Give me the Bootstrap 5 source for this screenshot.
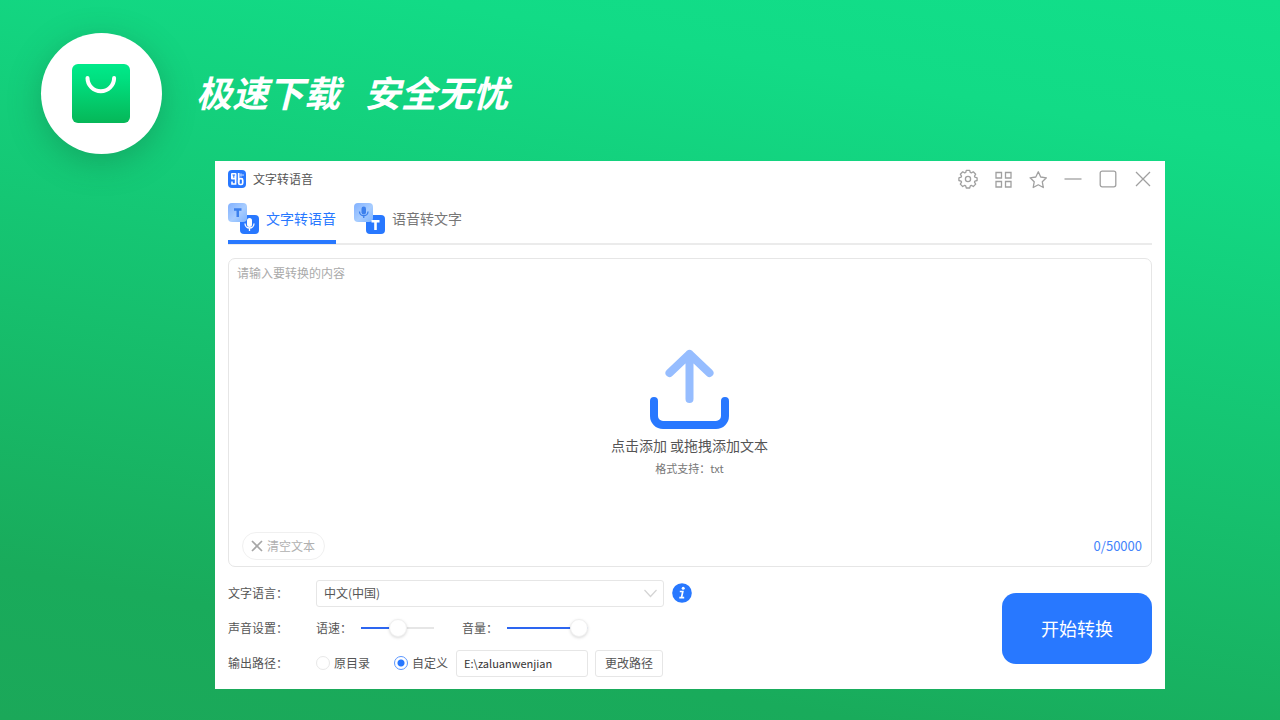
<!DOCTYPE html>
<html lang="zh-CN">
<head>
<meta charset="utf-8">
<meta name="viewport" content="width=device-width, initial-scale=1">
<title>文字转语音</title>
<link href="https://cdn.jsdelivr.net/npm/bootstrap@5.3.0/dist/css/bootstrap.min.css" rel="stylesheet">
<style>
:root { --blue: #2878ff; --line: #e6e6e6; --ink: #555; }
body { font-family: "Noto Sans CJK SC", sans-serif; font-size: 12px; line-height: 18px; color: var(--ink);
  background: linear-gradient(190deg, #11df8a 0%, #12db86 16%, #19ab5b 84%, #1ba859 100%); }
.hero { padding: 33px 41px 7px; gap: 34px; }
.logo-disc { width: 121px; height: 121px; background: #fff; box-shadow: 0 8px 32px rgba(20, 100, 60, .35); }
.slogan { font: italic 700 36px/48px "Noto Sans CJK SC", sans-serif; color: #fff; white-space: pre; padding-bottom: 6px; }
.app { margin: 0 115px 31px 215px; padding: 5px 13px 12px; background: #fff; }
.title-bar { height: 26px; }
.win-btns { gap: 15px; margin-right: -1px; }
.win-btns button, .plain { border: 0; background: none; padding: 0; color: inherit; }
.win-btns svg { fill: none; stroke: #a0a0a0; stroke-width: 1.3; display: block; }
.brand { gap: 7px; }
.brand span { padding-bottom: 1px; }
.tabs { border-bottom: 2px solid #ebebeb; gap: 18px; margin: 10px 0 13px; height: 43px; }
.tabs a { color: #777; font-size: 14px; text-decoration: none; gap: 6px; height: 42px; padding-bottom: 4px; border-bottom: 4px solid transparent; }
.tabs a.active { color: var(--blue); border-color: var(--blue); }
.tabs span { padding-bottom: 3px; }
.editor { border: 1px solid var(--line); border-radius: 7px; padding: 5px 9px 6px 8px; }
.editor textarea { border: 0; padding: 0; resize: none; height: 72px; outline: 0; font-size: 12px; line-height: 18px; }
.editor textarea::placeholder { color: #aaa; }
.upload { color: #555; }
.upload svg { margin: 13px 0 3px; }
.upload-main { font-size: 14px; line-height: 24px; }
.upload-sub { font-size: 11px; line-height: 22px; color: #777; }
.clear { height: 28px; border: 1px solid #f0f0f0; border-radius: 14px; background: #fff; color: #b0b0b0; padding: 0 9px 0 8px; margin-left: 5px; gap: 4px; }
.count { color: #4483fb; font-size: 13px; }
.settings { padding-top: 12px; gap: 7px; }
.set-row { min-height: 28px; }
.set-name { width: 88px; }
.field { height: 27px; border: 1px solid var(--line); border-radius: 3px; background-color: #fff; color: var(--ink); padding: 0 7px; font-size: 12px; }
.lang { width: 348px; appearance: none; padding-right: 26px; }
.lang-wrap svg { position: absolute; right: 7px; top: 9px; pointer-events: none; }
.path { width: 132px; margin-right: 7px; color: #333; font-size: 11px; }
.change { padding: 0 9px; }
.slide-name { margin-right: 9px; }
.slide { appearance: none; height: 20px; width: 73px; margin: 0; background: linear-gradient(to right, #2d66f0 var(--val), #e6e6e6 var(--val)) center / 100% 2px no-repeat; }
.slide-full { width: 81px; }
.slide::-webkit-slider-thumb { appearance: none; width: 18px; height: 18px; border-radius: 50%; background: #fff; border: 1px solid #f0f0f0; box-shadow: 0 1px 3px rgba(0, 0, 0, .15); }
.pick { appearance: none; width: 14px; height: 14px; margin: 0 4px 0 0; border: 1px solid #e8e8e8; border-radius: 50%; }
.pick:checked { border-color: #5c98ff; background: radial-gradient(circle, var(--blue) 3px, #fff 4px); }
.start { width: 150px; height: 71px; border: 0; border-radius: 14px; background: var(--blue); color: #fff; font-size: 18px; margin-top: 12px; }
</style>
</head>
<body class="min-vh-100 d-flex flex-column">
<header class="hero d-flex align-items-center">
  <div class="logo-disc rounded-circle d-flex align-items-center justify-content-center flex-shrink-0">
    <svg width="59" height="59" viewBox="0 0 59 59" aria-hidden="true">
      <defs><linearGradient id="bag" x1="0" y1="0" x2="0" y2="1"><stop offset="0" stop-color="#00ea8a"/><stop offset=".25" stop-color="#00e080"/><stop offset="1" stop-color="#06b758"/></linearGradient></defs>
      <rect width="58" height="59" rx="6" fill="url(#bag)"/>
      <path d="M15.500 14a13.300 13.300 0 0 0 26.600 0" fill="none" stroke="#fff" stroke-width="4" stroke-linecap="round"/>
    </svg>
  </div>
  <h1 class="slogan m-0">极速下载   安全无忧</h1>
</header>
<main class="app flex-grow-1 d-flex flex-column">
  <div class="title-bar d-flex align-items-center justify-content-between">
    <div class="brand d-flex align-items-center">
      <svg width="18" height="18" viewBox="0 0 18 18" aria-hidden="true">
        <rect width="18" height="18" rx="4" fill="#2878ff"/>
        <rect x="3" y="3" width="5.500" height="6.500" rx="1" fill="#fff"/>
        <path d="M4.500 5h2.600M5.800 5v2.800" stroke="#2878ff"/>
        <path d="M7.600 9v5H4v-2.500" fill="none" stroke="#fff" stroke-width="1.600"/>
        <path d="M10.700 3v9.500" stroke="#fff" stroke-width="1.700"/>
        <rect x="10.700" y="8.700" width="4" height="5.800" rx="1.500" fill="none" stroke="#fff" stroke-width="1.700"/>
        <path d="M13 3.500v3M15 4.300v1.500" stroke="#fff"/>
      </svg>
      <span>文字转语音</span>
    </div>
    <div class="win-btns d-flex align-items-center">
      <button aria-label="设置"><svg width="20" height="20" viewBox="0 0 20 20"><path d="M8.300 1.300h3.400l.6 2.200 1 .4 2-1.100 2.400 2.400-1.200 2 .4 1 2.200.6v2.700l-2.200.6-.4 1 1.200 2-2.400 2.400-2-1.200-1 .5-.6 2.200H8.300l-.6-2.200-1-.5-2 1.200-2.400-2.400 1.200-2-.4-1-2.200-.6V8.800l2.200-.6.4-1-1.200-2 2.400-2.400 2 1.100 1-.4z" stroke-linejoin="round"/><circle cx="10" cy="10" r="2.600"/></svg></button>
      <button aria-label="应用"><svg width="20" height="20" viewBox="0 0 20 20"><path d="M3 3.500h5.500V9H3zM12.500 3.500H18V9h-5.500zM3 12.500h5.500V18H3zM12.500 12.500H18V18h-5.500z"/></svg></button>
      <button aria-label="收藏"><svg width="20" height="20" viewBox="0 0 20 20"><path d="m10.300 2.800 2.400 5.200 5.700.8-4.100 4 1 5.700-5-2.700-5.100 2.700 1-5.700-4.100-4 5.700-.8z" stroke-linejoin="round"/></svg></button>
      <button aria-label="最小化"><svg width="20" height="20" viewBox="0 0 20 20"><path d="M1.500 10h17"/></svg></button>
      <button aria-label="最大化"><svg width="20" height="20" viewBox="0 0 20 20"><rect x="2.200" y="2.200" width="15.600" height="15.600" rx="2"/></svg></button>
      <button aria-label="关闭"><svg width="20" height="20" viewBox="0 0 20 20"><path d="m3 3 14 14M17 3 3 17"/></svg></button>
    </div>
  </div>
  <nav class="tabs d-flex">
    <a href="#tts" class="active d-flex align-items-center" aria-current="page">
      <svg width="32" height="32" viewBox="0 0 32 32" aria-hidden="true">
        <defs><linearGradient id="glass" x1="0" y1="0" x2="1" y2="1"><stop offset="0" stop-color="#82b1ff"/><stop offset=".55" stop-color="#a8cdff"/><stop offset="1" stop-color="#7eb4ff"/></linearGradient></defs>
        <rect x="12" y="12" width="19" height="19" rx="4" fill="#2878ff"/><rect width="19" height="19" rx="4" fill="url(#glass)"/>
        <path d="M6 6.500h7.500M9.750 6.500V14" stroke="#3c80ed" stroke-width="2.500"/>
        <rect x="19" y="15" width="5" height="9" rx="2.500" fill="#fff"/><path d="M17 20.500a4.500 4.500 0 0 0 9 0M21.500 25v3" fill="none" stroke="#fff" stroke-width="1.300"/>
      </svg><span>文字转语音</span></a>
    <a href="#stt" class="d-flex align-items-center">
      <svg width="32" height="32" viewBox="0 0 32 32" aria-hidden="true">
        <rect x="12" y="12" width="19" height="19" rx="4" fill="#2878ff"/><rect width="19" height="19" rx="4" fill="url(#glass)"/>
        <rect x="7.500" y="3.500" width="4.500" height="8" rx="2.250" fill="#3c80ed"/><path d="M5.500 8.500a4.250 4.250 0 0 0 8.500 0M9.750 12.500V15" fill="none" stroke="#3c80ed" stroke-width="1.300"/>
        <path d="M17.500 18.300h8M21.500 18.300V27" stroke="#fff" stroke-width="2.600"/>
      </svg><span>语音转文字</span></a>
  </nav>
  <section class="editor flex-grow-1 d-flex flex-column">
    <textarea class="w-100" aria-label="要转换的内容" placeholder="请输入要转换的内容"></textarea>
    <button class="upload plain d-flex flex-column align-items-center align-self-center">
      <svg width="80" height="81" viewBox="-1 0 80 81" fill="none" stroke-width="8" stroke-linecap="round" stroke-linejoin="round" aria-hidden="true">
        <path d="M39.500 50V5M19.500 24l20-19 20 19" stroke="#96bdff"/>
        <path d="M4 52v15a9 9 0 0 0 9 9h53a9 9 0 0 0 9-9V52" stroke="#2878ff"/>
      </svg>
      <span class="upload-main">点击添加 或拖拽添加文本</span>
      <span class="upload-sub">格式支持：txt</span>
    </button>
    <div class="d-flex align-items-center justify-content-between mt-auto">
      <button class="clear d-flex align-items-center"><svg width="12" height="12" viewBox="0 0 12 12" stroke="#a6a6a6" stroke-width="1.700" aria-hidden="true"><path d="m1 1 10 10M11 1 1 11"/></svg>清空文本</button>
      <span class="count">0/50000</span>
    </div>
  </section>
  <div class="d-flex justify-content-between align-items-center">
    <form class="settings d-flex flex-column">
      <div class="set-row d-flex align-items-center">
        <label class="set-name" for="lang">文字语言：</label>
        <div class="lang-wrap position-relative">
          <select id="lang" class="field lang d-block"><option>中文(中国)</option></select>
          <svg width="13" height="9" viewBox="0 0 13 9" fill="none" stroke="#d4d4d4" stroke-width="1.200" aria-hidden="true"><path d="m.5 1 6 6.500 6-6.500"/></svg>
        </div>
        <button type="button" class="plain ms-2" aria-label="说明"><svg class="d-block" width="20" height="20" viewBox="0 0 20 20"><circle cx="10" cy="10" r="9.800" fill="#2878ff"/><circle cx="11.200" cy="5.200" r="1.500" fill="#fff"/><path d="M7.800 8.500h3L9.500 14.600h2.700M7.300 14.600h3" fill="none" stroke="#fff" stroke-width="1.700"/></svg></button>
      </div>
      <div class="set-row d-flex align-items-center">
        <span class="set-name">声音设置：</span>
        <label for="speed" class="slide-name">语速：</label>
        <input id="speed" class="slide" type="range" value="50" style="--val:50%">
        <label for="volume" class="slide-name ms-4 ps-1">音量：</label>
        <input id="volume" class="slide slide-full" type="range" value="100" style="--val:100%">
      </div>
      <div class="set-row d-flex align-items-center">
        <span class="set-name">输出路径：</span>
        <label class="d-flex align-items-center me-4"><input class="pick" type="radio" name="dir">原目录</label>
        <label class="d-flex align-items-center me-2"><input class="pick" type="radio" name="dir" checked>自定义</label>
        <input class="field path" type="text" value="E:\zaluanwenjian" aria-label="输出路径">
        <button type="button" class="field change">更改路径</button>
      </div>
    </form>
    <button class="start">开始转换</button>
  </div>
</main>
<script src="https://cdn.jsdelivr.net/npm/bootstrap@5.3.0/dist/js/bootstrap.bundle.min.js"></script>
</body>
</html>
